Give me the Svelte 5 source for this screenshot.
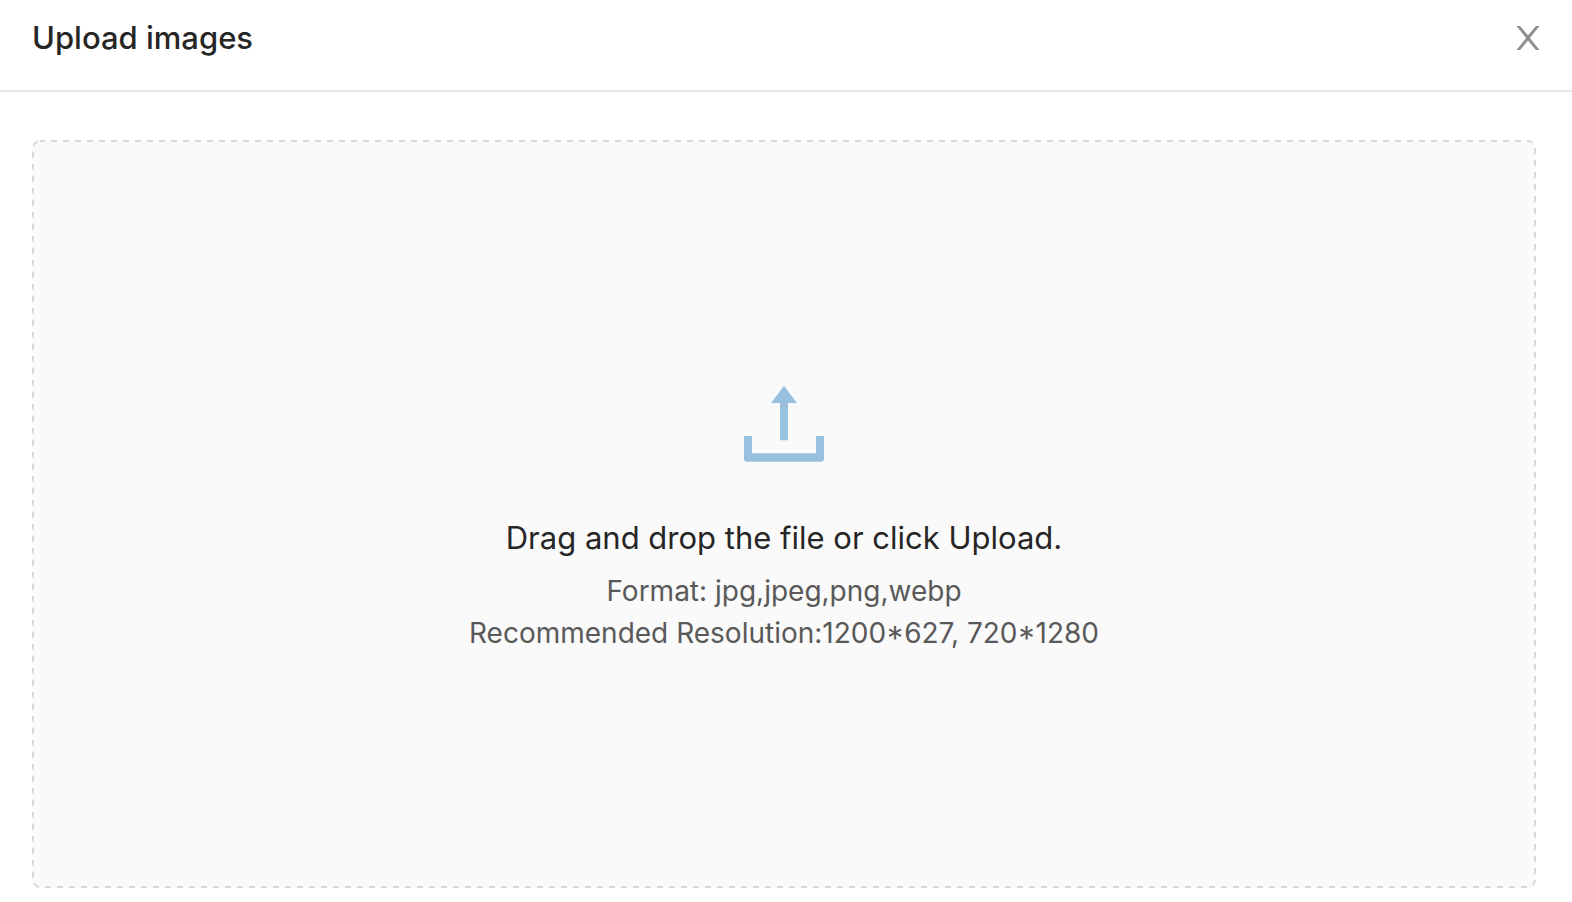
<script lang="ts">
  const formats = ['jpg', 'jpeg', 'png', 'webp'];
  const resolutions = ['1200*627', '720*1280'];
  const accept = formats.map((format) => `.${format}`).join(',');

  let open = $state(true);
  let files: File[] = $state([]);

  const handleFileChange = (event: Event) => {
    const target = event.target as HTMLInputElement;
    files = Array.from(target.files ?? []);
  };

  const handleDrop = (event: DragEvent) => {
    event.preventDefault();
    files = Array.from(event.dataTransfer?.files ?? []);
  };
</script>

{#if open}
  <main class="modal">
    <header>
      <h1>Upload images</h1>
      <button type="button" class="close" aria-label="Close" onclick={() => (open = false)}>
        <svg viewBox="0 0 24 24" aria-hidden="true">
          <path d="M0.5 0H4.1L12 9.5L19.9 0H23.5L13.8 12L23.5 24H19.9L12 14.5L4.1 24H0.5L10.2 12Z" />
        </svg>
      </button>
    </header>

    <section class="body">
      <!-- svelte-ignore a11y_no_noninteractive_element_interactions -->
      <label class="dropzone" ondragover={(e) => e.preventDefault()} ondrop={handleDrop}>
        <!-- svg outline, css dashes are too dense at this width -->
        <svg class="outline" aria-hidden="true">
          <rect x="1" y="1" rx="7" />
        </svg>
        <input type="file" {accept} multiple onchange={handleFileChange} />
        <svg class="upload-icon" viewBox="0 0 96 96" aria-hidden="true">
          <path d="M48 9.7L61 27H52V64.3H44V27H35Z" />
          <path d="M8 60H16V77.3H80V60H88V82.7Q88 85.7 85 85.7H11Q8 85.7 8 82.7Z" />
        </svg>
        <span class="prompt">Drag and drop the file or click Upload.</span>
        <span class="hint">Format: {formats.join(',')}</span>
        <span class="hint">Recommended Resolution:{resolutions.join(', ')}</span>
      </label>
    </section>
  </main>
{/if}

<style>
  :global(body) {
    margin: 0;
    background: #fff;
  }

  .modal {
    display: flex;
    flex-direction: column;
    min-height: 100vh;
    font-family: Inter, 'Liberation Sans', sans-serif;
    color: #262626;
  }

  header {
    display: flex;
    align-items: center;
    justify-content: space-between;
    padding: 14px 32px 28px;
    border-bottom: 2px solid #e8e8e8;
  }

  h1 {
    margin: 0;
    font-size: 31px;
    line-height: 48px;
    font-weight: 500;
  }

  .close {
    padding: 0;
    border: none;
    background: none;
    cursor: pointer;
  }

  .close svg {
    display: block;
    width: 24px;
    height: 24px;
    fill: #8c8c8c;
  }

  .close:hover svg {
    fill: #262626;
  }

  .body {
    display: flex;
    flex: 1;
    padding: 48px 36px 14px 32px;
  }

  .dropzone {
    display: flex;
    flex: 1;
    flex-direction: column;
    align-items: center;
    justify-content: center;
    box-sizing: border-box;
    position: relative;
    padding-top: 2px;
    border-radius: 8px;
    background: #fafafa;
    text-align: center;
    cursor: pointer;
  }

  .outline {
    position: absolute;
    inset: 0;
    width: 100%;
    height: 100%;
  }

  .outline rect {
    width: calc(100% - 2px);
    height: calc(100% - 2px);
    fill: none;
    stroke: #d9d9d9;
    stroke-width: 2px;
    stroke-dasharray: 6 6;
    stroke-dashoffset: 1px;
  }

  .dropzone:hover .outline rect,
  .dropzone:focus-within .outline rect {
    stroke: #98c1e0;
  }

  .dropzone input {
    position: absolute;
    width: 1px;
    height: 1px;
    opacity: 0;
  }

  .upload-icon {
    width: 96px;
    height: 96px;
    margin-bottom: 42px;
    fill: #98c1e0;
  }

  .prompt {
    margin-bottom: 8px;
    font-size: 31px;
    line-height: 48px;
  }

  .hint {
    font-size: 28px;
    line-height: 42px;
    color: #595959;
  }
</style>
